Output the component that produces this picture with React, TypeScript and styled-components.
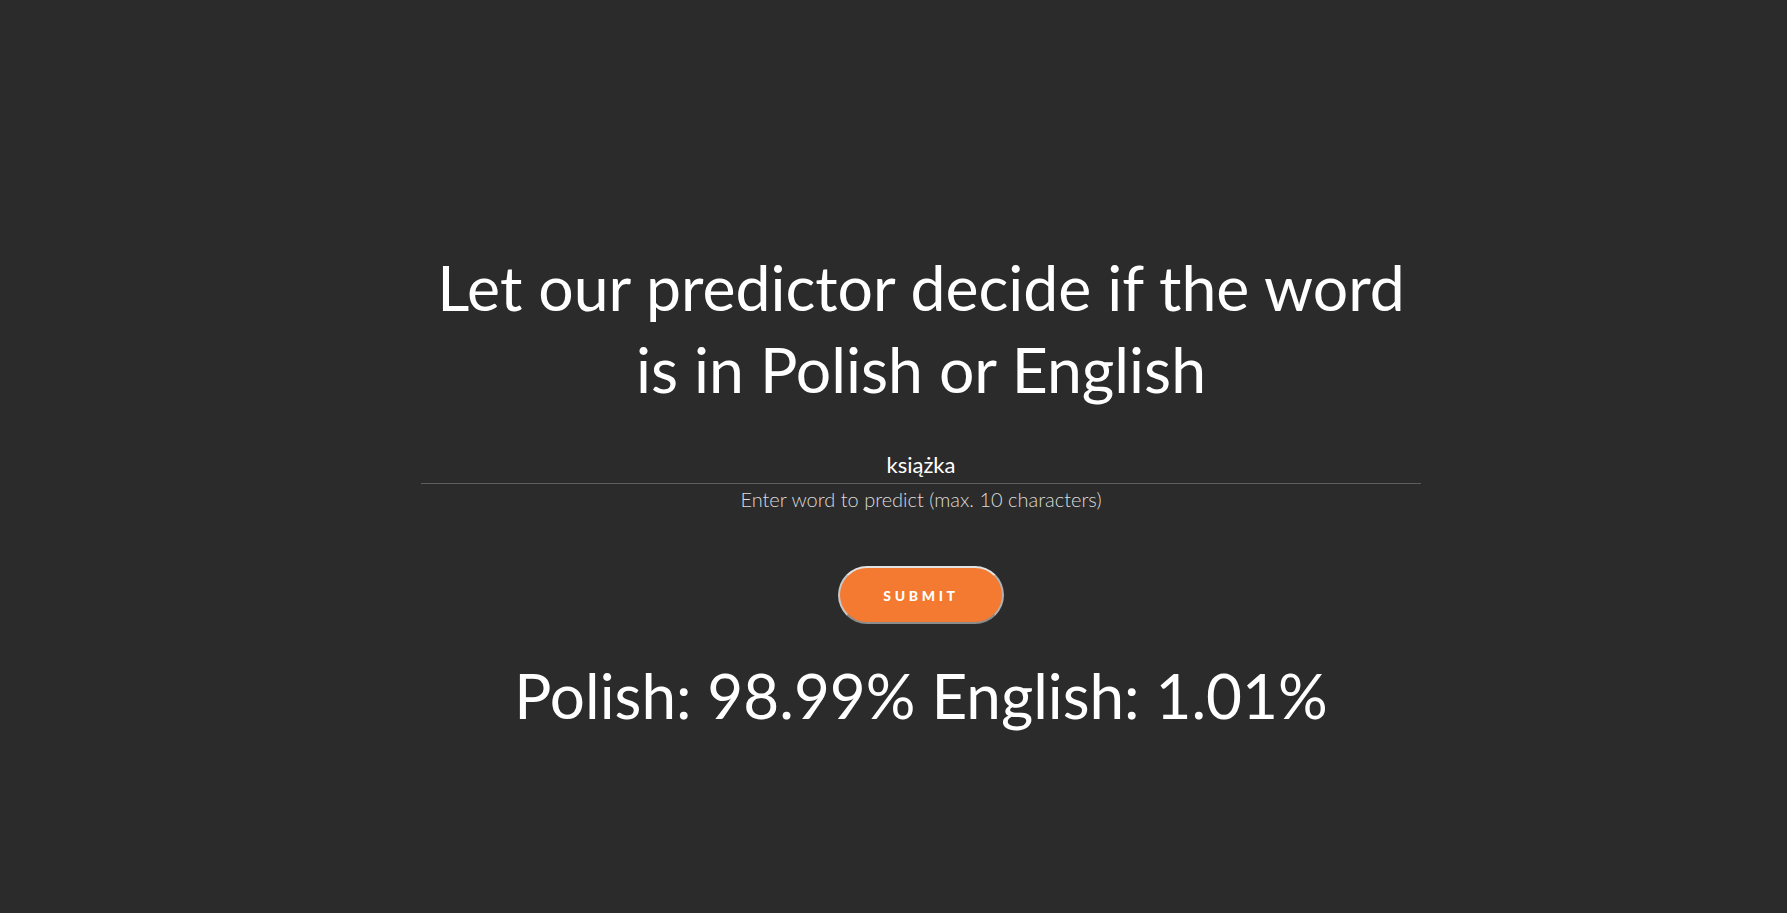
import { useState } from "react";
import styled, { createGlobalStyle } from "styled-components";

const GlobalStyle = createGlobalStyle`
  html, body {
    margin: 0;
    padding: 0;
    background-color: #2b2b2b;
    font-family: Lato, "Open Sans", sans-serif;
  }
`;

const App = () => {
  const [word, setWord] = useState("książka");

  return (
    <Page>
      <GlobalStyle />
      <Title>
        Let our predictor decide if the word
        <br />
        is in Polish or English
      </Title>
      <Field>
        <WordInput
          value={word}
          maxLength={10}
          onChange={(e) => setWord(e.target.value)}
        />
        <Helper>Enter word to predict (max. 10 characters)</Helper>
      </Field>
      <SubmitButton type="button">Submit</SubmitButton>
      <Result>Polish: 98.99% English: 1.01%</Result>
    </Page>
  );
};

const Page = styled.main`
  min-height: 913px;
  box-sizing: border-box;
  display: flex;
  flex-direction: column;
  align-items: center;
  padding: 246px 0 0 55px;
  color: #ffffff;
`;

const Title = styled.h1`
  margin: 0;
  font-size: 62.5px;
  font-weight: 400;
  line-height: 82px;
  text-align: center;
  color: #ffffff;
`;

const Field = styled.div`
  display: flex;
  flex-direction: column;
  align-items: center;
  margin-top: 38px;
  width: 1000px;
`;

const WordInput = styled.input`
  width: 100%;
  box-sizing: border-box;
  background: transparent;
  border: none;
  border-bottom: 1px solid #5e5e5e;
  outline: none;
  padding: 3px 0 5px;
  color: #ffffff;
  font-family: Lato, sans-serif;
  font-size: 22px;
  font-weight: 400;
  text-align: center;
`;

const Helper = styled.p`
  margin: 3px 0 0;
  font-size: 20px;
  font-weight: 300;
  color: #dcdcdc;
`;

const SubmitButton = styled.button`
  margin-top: 55px;
  width: 166px;
  height: 58px;
  border-radius: 29px;
  border: 2px solid;
  border-color: #e2e2e2 #b0b0b0 #8c8c8c #c8c8c8;
  background-color: #f37a30;
  color: #ffffff;
  font-family: Lato, sans-serif;
  font-size: 14px;
  font-weight: 900;
  letter-spacing: 0.26em;
  text-transform: uppercase;
  cursor: pointer;
`;

const Result = styled.h2`
  margin: 31px 0 0;
  font-size: 62px;
  font-weight: 400;
  line-height: 80px;
  color: #ffffff;
`;

export default App;
